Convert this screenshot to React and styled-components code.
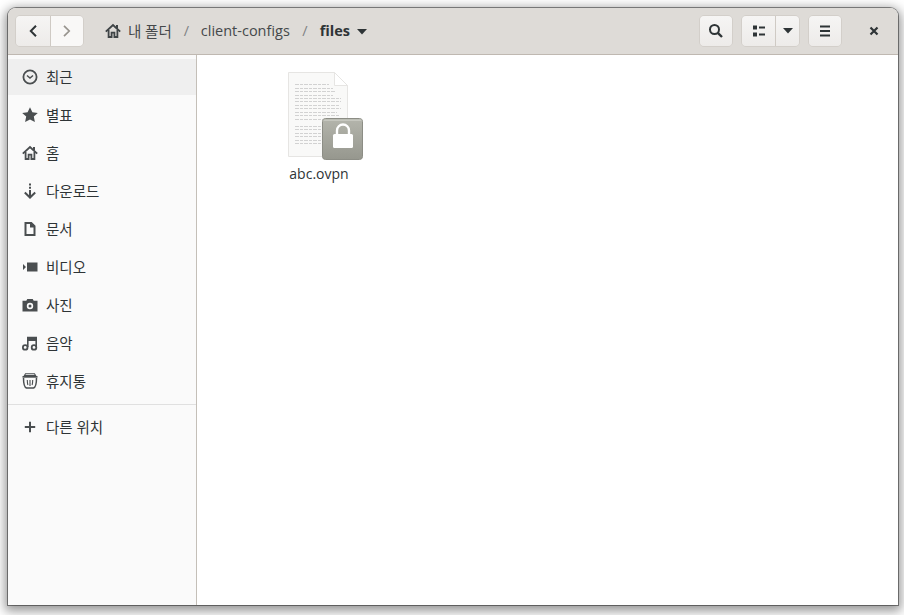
import React from "react";
import styled, { createGlobalStyle } from "styled-components";

const GlobalStyle = createGlobalStyle`
  html, body { margin: 0; padding: 0; background: #fff; }
  body { font-family: "Open Sans", "Noto Sans CJK KR", sans-serif; }
`;

const Stage = styled.div`
  width: 904px;
  height: 615px;
  padding: 8px 6px 10px 8px;
  box-sizing: border-box;
  overflow: hidden;
`;

const Window = styled.div`
  height: 100%;
  display: flex;
  flex-direction: column;
  border-radius: 8px 8px 0 0;
  background: #fff;
  box-shadow: 0 0 0 1px rgba(0, 0, 0, 0.42), 0 3px 11px 3px rgba(0, 0, 0, 0.42);
  overflow: hidden;
`;

const Header = styled.header`
  flex: 0 0 46px;
  display: flex;
  align-items: center;
  padding: 0 6px 0 7px;
  background: #dedbd7;
  border-bottom: 1px solid #bfb8b1;
`;

const ButtonGroup = styled.div`
  display: flex;
  height: 32px;
  margin-left: ${(p) => p.$gap || 0}px;
  border-radius: 5px;
  border: 1px solid #d3cfca;
  box-sizing: border-box;
  overflow: hidden;
`;

const ToolButton = styled.div`
  box-sizing: border-box;
  width: ${(p) => p.$w || 32}px;
  display: flex;
  align-items: center;
  justify-content: center;
  color: ${(p) => (p.$disabled ? "#98948e" : "#2e3436")};
  background: ${(p) =>
    p.$disabled ? "#f9f8f7" : "linear-gradient(#f6f5f4, #edebe9)"};
  & + & {
    border-left: 1px solid #cfcac4;
  }
`;

const Path = styled.nav`
  flex: 1;
  display: flex;
  align-items: center;
  margin-left: 21px;
  padding-bottom: 1px;
  font-size: 14.5px;
  color: #3f4446;
`;

const Crumb = styled.span`
  font-weight: ${(p) => (p.$bold ? 700 : 400)};
  color: ${(p) => (p.$bold ? "#2e3436" : "#45494b")};
  margin-left: ${(p) => p.$ml || 0}px;
  white-space: nowrap;
`;

const Slash = styled.span`
  width: ${(p) => p.$w || 29}px;
  text-align: center;
  color: #7f8284;
`;

const Caret = styled.svg`
  margin-left: ${(p) => p.$ml || 0}px;
  margin-top: ${(p) => p.$mt || 0}px;
`;

const CloseBox = styled.div`
  width: 34px;
  margin-left: 15px;
  margin-right: 1px;
  display: flex;
  justify-content: center;
  color: #2e3436;
`;

const Body = styled.div`
  flex: 1;
  display: flex;
  min-height: 0;
`;

const Sidebar = styled.aside`
  flex: 0 0 188px;
  display: flex;
  flex-direction: column;
  gap: 2px;
  padding-top: 4px;
  background: #fafafa;
  border-right: 1px solid #c4bfb8;
`;

const Row = styled.div`
  flex: none;
  box-sizing: border-box;
  height: 36px;
  padding: 0 0 1px 14px;
  display: flex;
  align-items: center;
  gap: 8px;
  font-size: 14.5px;
  color: #2e3436;
  background: ${(p) => (p.$active ? "#efefef" : "transparent")};
  & > svg {
    flex: none;
    color: #4a4e50;
  }
`;

const Divider = styled.div`
  flex: none;
  height: 1px;
  margin: 3px 0 2px;
  background: #e0e0e0;
`;

const Files = styled.main`
  flex: 1;
  display: flex;
  align-items: flex-start;
  padding: 17px 0 0 77px;
`;

const FileItem = styled.div`
  width: 90px;
  display: flex;
  flex-direction: column;
  align-items: center;
  gap: 3px;
`;

const FileIconSvg = styled.svg`
  margin-left: 14px;
`;

const FileName = styled.span`
  font-size: 14px;
  line-height: 20px;
  color: #2e3436;
`;

const Ico = ({ children, size = 16 }) => (
  <svg width={size} height={size} viewBox="0 0 16 16" fill="currentColor">
    {children}
  </svg>
);

const HomeGlyph = (
  <>
    <path d="M.8 8.600 8 2l7.200 6.600" fill="none" stroke="currentColor" strokeWidth="1.900" />
    <path d="M3.600 7v7h3V9.700h2.800V14h3V7" fill="none" stroke="currentColor" strokeWidth="1.800" />
    <path d="M11 2h2v3.500h-2z" />
  </>
);

const icons = {
  recent: (
    <Ico>
      <circle cx="8" cy="8" r="6.600" fill="none" stroke="currentColor" strokeWidth="1.800" />
      <path d="M5 6.500 8 9l3-2.500" fill="none" stroke="currentColor" strokeWidth="1.500" />
    </Ico>
  ),
  star: (
    <Ico>
      <path d="M8 .3l2.400 4.900 5.400.7-4 3.700 1.100 5.500L8 12.400l-4.900 2.700 1.100-5.500-4-3.700 5.400-.7z" />
    </Ico>
  ),
  home: <Ico>{HomeGlyph}</Ico>,
  download: (
    <Ico>
      <path d="M7 .5h2v2H7zM7 3.800h2v2H7z" />
      <path d="M8 7v7M2.800 9.500 8 14.500l5.200-5" fill="none" stroke="currentColor" strokeWidth="2" />
    </Ico>
  ),
  doc: (
    <Ico>
      <path d="M2.500 1h7.200L13.500 4.800V15h-11V1zm2 2v10h7V6.500H8V3H4.500z" fillRule="evenodd" />
    </Ico>
  ),
  video: (
    <Ico>
      <path d="M5 3.500h10.500v9H5zM1 5l3 3-3 3z" />
    </Ico>
  ),
  camera: (
    <Ico>
      <path d="M5.300 2h5.400L11.700 3.700h3.800V14.500H.5V3.700h3.800zM8 5.800a3.200 3.200 0 1 0 0 6.400 3.200 3.200 0 0 0 0-6.400zm0 1.700a1.500 1.500 0 1 1 0 3 1.500 1.500 0 0 1 0-3z" fillRule="evenodd" />
    </Ico>
  ),
  music: (
    <Ico>
      <path d="M5 1.800h10V6H6.600v6H5zM13.400 6H15v6h-1.600z" fillRule="evenodd" />
      <circle cx="3.200" cy="12.400" r="2.300" fill="none" stroke="currentColor" strokeWidth="1.800" />
      <circle cx="12" cy="12.400" r="2.300" fill="none" stroke="currentColor" strokeWidth="1.800" />
    </Ico>
  ),
  trash: (
    <Ico>
      <path d="M3.500.8h9l1 1.700h-11z" fill="none" stroke="currentColor" strokeWidth="1.100" />
      <path d="M.5 3h15v1.700H.5z" />
      <path d="M1.500 5c0 5 .7 9.200 3 10h7c2.300-.8 3-5 3-10" fill="none" stroke="currentColor" strokeWidth="1.500" />
      <path d="M5.300 7c0 2 .2 3.500.6 5M8 7v6M10.700 7c0 2-.2 3.500-.6 5" fill="none" stroke="currentColor" strokeWidth="1.100" />
    </Ico>
  ),
  plus: (
    <Ico>
      <path d="M7 2.800h2V7h4.200v2H9v4.200H7V9H2.800V7H7z" />
    </Ico>
  ),
};

const places = [
  { label: "최근", icon: "recent", active: true },
  { label: "별표", icon: "star" },
  { label: "홈", icon: "home" },
  { label: "다운로드", icon: "download" },
  { label: "문서", icon: "doc" },
  { label: "비디오", icon: "video" },
  { label: "사진", icon: "camera" },
  { label: "음악", icon: "music" },
  { label: "휴지통", icon: "trash" },
];

// text lines on the page thumbnail, [y, width]
const pageLines = [
  [12, 34], [16, 38], [19, 41], [23, 38], [26, 46], [29, 46], [33, 44], [36, 46],
  [40, 42], [43, 44], [47, 28], [54, 26], [57, 26], [61, 26], [64, 26], [68, 26], [71, 26],
];

const OvpnIcon = () => (
  <FileIconSvg width="76" height="89" viewBox="0 0 76 89">
    <defs>
      <linearGradient id="lockBg" x1="0" y1="0" x2="0" y2="1">
        <stop offset="0" stopColor="#b4b5ac" />
        <stop offset="1" stopColor="#96978e" />
      </linearGradient>
    </defs>
    <path d="M.5.5h46l13 13v71H.5z" fill="#f9f9f8" stroke="#e6e5e3" />
    <path d="M46.500.5v13h13z" fill="#fff" stroke="#e6e5e3" />
    {pageLines.map(([y, w]) => (
      <line key={y} x1="7" x2={7 + w} y1={y + 0.5} y2={y + 0.5} stroke="#d2d2d2" strokeDasharray="4 1 3 1" />
    ))}
    <rect x="34.500" y="46.500" width="40" height="41" rx="3" fill="url(#lockBg)" stroke="#8c8d85" />
    <rect x="35.500" y="47.500" width="38" height="1.500" fill="#c6c7bf" />
    <path d="M49 63v-4.500a6 6 0 0 1 12 0V63" fill="none" stroke="#fff" strokeWidth="2.400" />
    <rect x="45" y="62" width="20" height="14" rx="1.500" fill="#fff" />
  </FileIconSvg>
);

const App = () => {
  return (
    <>
      <GlobalStyle />
      <Stage>
        <Window>
          <Header>
            <ButtonGroup>
              <ToolButton $w={34}>
                <Ico>
                  <path d="M11 2.800 5.800 8l5.200 5.200" fill="none" stroke="currentColor" strokeWidth="2" />
                </Ico>
              </ToolButton>
              <ToolButton $w={33} $disabled>
                <Ico>
                  <path d="M5 2.800 10.200 8 5 13.200" fill="none" stroke="currentColor" strokeWidth="1.700" />
                </Ico>
              </ToolButton>
            </ButtonGroup>
            <Path>
              <Ico>{HomeGlyph}</Ico>
              <Crumb $ml={7}>내 폴더</Crumb>
              <Slash>/</Slash>
              <Crumb>client-configs</Crumb>
              <Slash $w={30}>/</Slash>
              <Crumb $bold>files</Crumb>
              <Caret width="10" height="6" viewBox="0 0 10 6" $ml={7} $mt={2}>
                <path d="M0 0h10L5 5.500z" fill="#2e3436" />
              </Caret>
            </Path>
            <ButtonGroup>
              <ToolButton>
                <Ico>
                  <circle cx="6.500" cy="6.500" r="4.500" fill="none" stroke="currentColor" strokeWidth="2" />
                  <path d="M9.800 9.800 14 14" stroke="currentColor" strokeWidth="2.400" />
                </Ico>
              </ToolButton>
            </ButtonGroup>
            <ButtonGroup $gap={8}>
              <ToolButton $w={33}>
                <Ico>
                  <path d="M2 2.500h4v4H2zM8 3.500h6v2H8zM2 9.500h4v4H2zM8 10.500h6v2H8z" />
                </Ico>
              </ToolButton>
              <ToolButton $w={24}>
                <Caret width="10" height="6" viewBox="0 0 10 6">
                  <path d="M0 0h10L5 5.500z" fill="currentColor" />
                </Caret>
              </ToolButton>
            </ButtonGroup>
            <ButtonGroup $gap={8}>
              <ToolButton>
                <Ico>
                  <path d="M3 2.500h10v2H3zM3 7h10v2H3zM3 11.500h10v2H3z" />
                </Ico>
              </ToolButton>
            </ButtonGroup>
            <CloseBox>
              <Ico>
                <path d="M4.500 4.500l7 7M11.500 4.500l-7 7" stroke="currentColor" strokeWidth="2.200" />
              </Ico>
            </CloseBox>
          </Header>
          <Body>
            <Sidebar>
              {places.map((p) => (
                <Row key={p.label} $active={p.active}>
                  {icons[p.icon]}
                  {p.label}
                </Row>
              ))}
              <Divider />
              <Row>
                {icons.plus}
                다른 위치
              </Row>
            </Sidebar>
            <Files>
              <FileItem>
                <OvpnIcon />
                <FileName>abc.ovpn</FileName>
              </FileItem>
            </Files>
          </Body>
        </Window>
      </Stage>
    </>
  );
};

export default App;
